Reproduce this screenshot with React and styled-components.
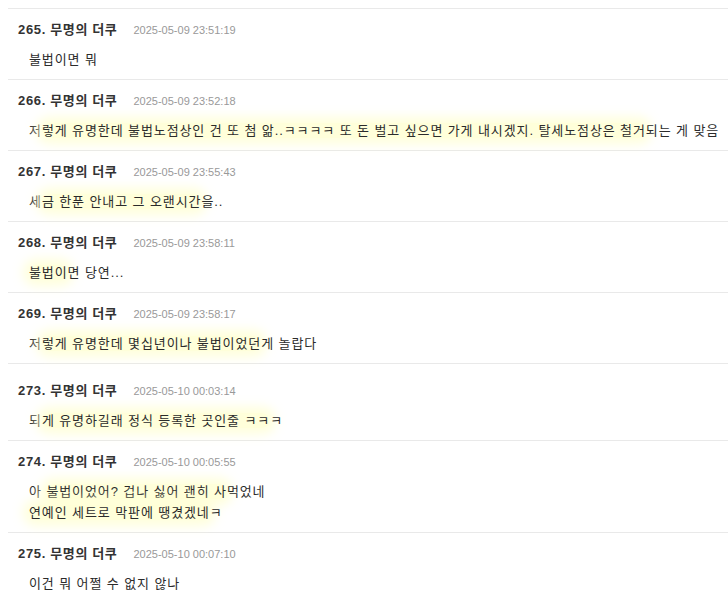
import React from "react";
import styled, { createGlobalStyle } from "styled-components";

const GlobalStyle = createGlobalStyle`
  html, body {
    overflow-x: hidden;
  }
  body {
    margin: 8px 0 0 8px;
    background: #fff;
    font-family: "Liberation Sans", "Noto Sans CJK KR", sans-serif;
    color: #333;
  }
`;

const List = styled.ul`
  list-style: none;
  margin: 0;
  padding: 0;
`;

const Item = styled.li`
  border-top: 1px solid #e9e9e9;
  padding: ${(p) => 11 + (p.$extra || 0)}px 0 9px 10px;
`;

const Meta = styled.div`
  display: flex;
  align-items: baseline;
  gap: 16px;
  height: 20px;
  line-height: 20px;
`;

const Name = styled.span`
  font-size: 13px;
  font-weight: 700;
  color: #333;
  letter-spacing: 0.65px;
`;

const Time = styled.span`
  font-size: 11px;
  color: #999;
`;

const Body = styled.div`
  margin-top: 9px;
  padding-left: 11px;
  font-size: 13px;
  line-height: 21px;
  letter-spacing: 0.9px;
  color: #2b2b2b;
  white-space: nowrap;
`;

const Mark = styled.span`
  background: rgba(255, 255, 205, 0.75);
  box-shadow: 0 0 11px 6px rgba(255, 255, 205, 0.7);
  border-radius: 10px;
`;

const comments = [
  { no: 265, time: "2025-05-09 23:51:19", lines: [["불법이면 뭐"]] },
  {
    no: 266,
    time: "2025-05-09 23:52:18",
    lines: [
      [
        "저",
        { m: "렇게 유명한데 불법노점상인 건 또 첨 앎..ㅋㅋㅋㅋ 또 돈 벌고 싶으면 가게 내시겠지. 탈세노점상은 철거" },
        "되는 게 맞음",
      ],
    ],
  },
  {
    no: 267,
    time: "2025-05-09 23:55:43",
    lines: [["세", { m: "금 한푼 안내고 그 오랜시간" }, "을.."]],
  },
  { no: 268, time: "2025-05-09 23:58:11", lines: [[{ m: "불법이" }, "면 당연..."]] },
  {
    no: 269,
    time: "2025-05-09 23:58:17",
    lines: [["저", { m: "렇게 유명한데 몇십년이나 불법이었던" }, "게 놀랍다"]],
  },
  {
    no: 273,
    time: "2025-05-10 00:03:14",
    extra: 6,
    lines: [["되", { m: "게 유명하길래 정식 등록한 곳인줄 ㅋㅋ" }, "ㅋ"]],
  },
  {
    no: 274,
    time: "2025-05-10 00:05:55",
    lines: [
      ["아 ", { m: "불법이었어? 겁나 싫어 괜히 사" }, "먹었네"],
      [{ m: "연예인 세트로 막판에 땡겼겠네" }, "ㅋ"],
    ],
  },
  { no: 275, time: "2025-05-10 00:07:10", lines: [["이건 뭐 어쩔 수 없지 않나"]] },
];

export default function App() {
  return (
    <>
      <GlobalStyle />
      <List>
        {comments.map((c) => (
          <Item key={c.no} $extra={c.extra}>
            <Meta>
              <Name>{c.no}. 무명의 더쿠</Name>
              <Time>{c.time}</Time>
            </Meta>
            <Body>
              {c.lines.map((line, i) => (
                <div key={i}>
                  {line.map((part, j) =>
                    typeof part === "string" ? (
                      <React.Fragment key={j}>{part}</React.Fragment>
                    ) : (
                      <Mark key={j}>{part.m}</Mark>
                    )
                  )}
                </div>
              ))}
            </Body>
          </Item>
        ))}
      </List>
    </>
  );
}
